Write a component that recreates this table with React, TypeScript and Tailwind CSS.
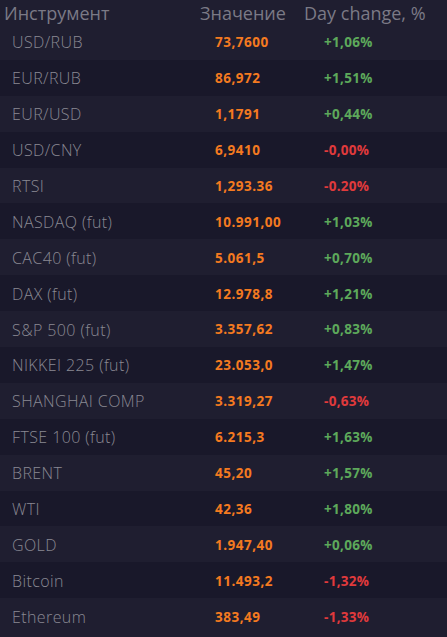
import React from "react";

type Row = {
  name: string;
  value: string;
  change: string;
};

const rows: Row[] = [
  { name: "USD/RUB", value: "73,7600", change: "+1,06%" },
  { name: "EUR/RUB", value: "86,972", change: "+1,51%" },
  { name: "EUR/USD", value: "1,1791", change: "+0,44%" },
  { name: "USD/CNY", value: "6,9410", change: "-0,00%" },
  { name: "RTSI", value: "1,293.36", change: "-0.20%" },
  { name: "NASDAQ (fut)", value: "10.991,00", change: "+1,03%" },
  { name: "CAC40 (fut)", value: "5.061,5", change: "+0,70%" },
  { name: "DAX (fut)", value: "12.978,8", change: "+1,21%" },
  { name: "S&P 500 (fut)", value: "3.357,62", change: "+0,83%" },
  { name: "NIKKEI 225 (fut)", value: "23.053,0", change: "+1,47%" },
  { name: "SHANGHAI COMP", value: "3.319,27", change: "-0,63%" },
  { name: "FTSE 100 (fut)", value: "6.215,3", change: "+1,63%" },
  { name: "BRENT", value: "45,20", change: "+1,57%" },
  { name: "WTI", value: "42,36", change: "+1,80%" },
  { name: "GOLD", value: "1.947,40", change: "+0,06%" },
  { name: "Bitcoin", value: "11.493,2", change: "-1,32%" },
  { name: "Ethereum", value: "383,49", change: "-1,33%" },
];

export default function App() {
  return (
    <div className="w-[447px] h-[637px] overflow-hidden bg-[#1f1e30] font-['Open_Sans',sans-serif]">
      {/* header */}
      <div className="h-[24px] flex items-center text-[18px] leading-none text-[#7b7a86] pt-[2px]">
        <div className="w-[200px] pl-[4px]">Инструмент</div>
        <div className="w-[104px]">Значение</div>
        <div>Day change, %</div>
      </div>
      {rows.map((r, i) => (
        <div
          key={r.name}
          className={`h-[35.9px] flex items-center ${i % 2 === 1 ? "bg-[#19182a]" : "bg-[#1f1e30]"}`}
        >
          <div className="w-[215px] pl-[12px] pt-[1px] text-[16px] font-light text-[#8a8993] tracking-[0.4px]">
            {r.name}
          </div>
          <div className="w-[109px] pt-[1px] text-[13.5px] font-bold text-[#f47a20] tracking-[0.5px]">
            {r.value}
          </div>
          <div
            className={`pt-[1px] text-[13.5px] font-bold tracking-[0.3px] ${r.change.startsWith("-") ? "text-[#e03a3c]" : "text-[#5da95b]"}`}
          >
            {r.change}
          </div>
        </div>
      ))}
    </div>
  );
}
